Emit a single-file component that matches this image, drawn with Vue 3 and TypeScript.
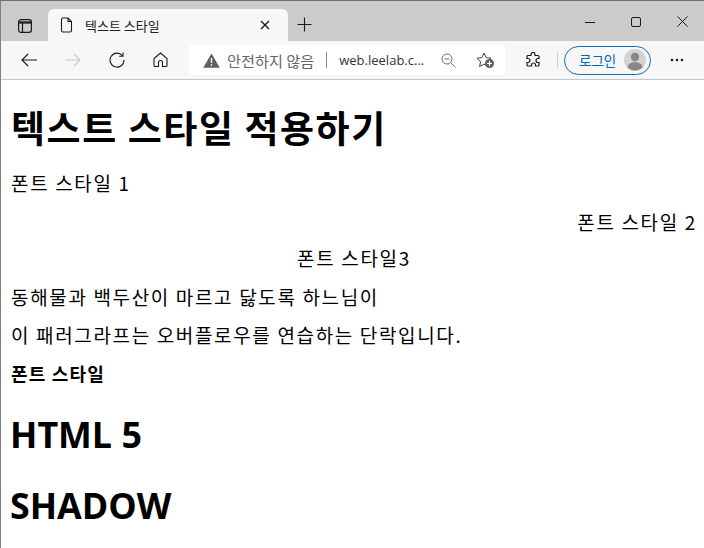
<script setup lang="ts">
const lines: { text: string; cls: string }[] = [
  { text: '폰트 스타일 1', cls: 'p1' },
  { text: '폰트 스타일 2', cls: 'p2' },
  { text: '폰트 스타일3', cls: 'p3' },
  { text: '동해물과 백두산이 마르고 닳도록 하느님이', cls: 'p4' },
  { text: '이 패러그라프는 오버플로우를 연습하는 단락입니다.', cls: 'p5' },
  { text: '폰트 스타일', cls: 'p6' },
]
</script>

<template>
  <div class="window">
    <div class="tabbar">
      <svg class="sidebar-icon" width="16" height="16" viewBox="0 0 16 16" fill="none" stroke="#1a1a1a" stroke-width="1.2">
        <rect x="1.6" y="1.6" width="12.8" height="12.8" rx="2.4" />
        <path d="M1.6 4.500h12.8" stroke-width="2.200" />
        <path d="M5.5 5v9.4" />
      </svg>
      <div class="tab">
        <svg class="doc" width="14" height="16" viewBox="0 0 14 16" fill="none" stroke="#1a1a1a" stroke-width="1.1">
          <path d="M2.5 1h5.5l3.5 3.5V13.5a1.5 1.5 0 0 1-1.5 1.5H3A1.5 1.5 0 0 1 1.500 13.500V2.500A1.500 1.500 0 0 1 3 1z" />
          <path d="M8 1v3.500h3.500" />
        </svg>
        <span class="tab-title">텍스트 스타일</span>
        <svg class="tab-close" width="10" height="10" viewBox="0 0 10 10" stroke="#1a1a1a" stroke-width="1.400">
          <path d="M1 1l8 8M9 1l-8 8" />
        </svg>
      </div>
      <svg class="plus" width="15" height="15" viewBox="0 0 15 15" stroke="#1a1a1a" stroke-width="1.100">
        <path d="M7.500 0.500v14M0.500 7.500h14" />
      </svg>
      <div class="win-controls">
        <svg width="10" height="10" viewBox="0 0 10 10" stroke="#1a1a1a" stroke-width="1"><path d="M0 5.500h10" /></svg>
        <svg width="10" height="10" viewBox="0 0 10 10" fill="none" stroke="#1a1a1a" stroke-width="1"><rect x="0.500" y="0.500" width="9" height="9" rx="1.500" /></svg>
        <svg width="11" height="11" viewBox="0 0 11 11" stroke="#1a1a1a" stroke-width="1"><path d="M0.500 0.500l10 10M10.500 0.500l-10 10" /></svg>
      </div>
    </div>
    <div class="toolbar">
      <svg class="t-back" width="16" height="14" viewBox="0 0 16 14" fill="none" stroke="#1a1a1a" stroke-width="1.100">
        <path d="M16 7H1M7 1L1 7l6 6" />
      </svg>
      <svg class="t-fwd" width="16" height="14" viewBox="0 0 16 14" fill="none" stroke="#c8c8c8" stroke-width="1.100">
        <path d="M0 7h15M9 1l6 6-6 6" />
      </svg>
      <svg class="t-reload" width="16" height="16" viewBox="0 0 16 16" fill="none" stroke="#1a1a1a" stroke-width="1.100">
        <path d="M13.500 3.800A7 7 0 1 0 15 8" />
        <path d="M14 0.500v3.800h-3.800" />
      </svg>
      <svg class="t-home" width="15" height="16" viewBox="0 0 15 16" fill="none" stroke="#1a1a1a" stroke-width="1.100">
        <path d="M7.500 1L1 6.500V13.500a1 1 0 0 0 1 1h3.500V10.500a2 2 0 0 1 4 0v4H13a1 1 0 0 0 1-1V6.500z" />
      </svg>
      <div class="address">
        <svg class="warn" width="17" height="15" viewBox="0 0 17 15">
          <path d="M8.500 0.500L16.800 14.800H0.200z" fill="#5f5f5f" />
          <path d="M8.500 5v5M8.500 11.300v1.500" stroke="#fff" stroke-width="1.400" />
        </svg>
        <span class="insecure">안전하지 않음</span>
        <span class="sep"></span>
        <span class="url">web.leelab.c...</span>
        <svg class="zoom" width="15" height="15" viewBox="0 0 15 15" fill="none" stroke="#707070" stroke-width="1">
          <circle cx="6" cy="6" r="5" />
          <path d="M9.700 9.700L14.500 14.500M3.500 6h5" />
        </svg>
        <svg class="fav" width="19" height="17" viewBox="0 0 19 17" fill="none">
          <path d="M8 1l2.100 4.600 5 .6-3.700 3.400 1 4.900L8 12.100l-4.400 2.400 1-4.900L.9 6.200l5-.6z" stroke="#444" stroke-width="1" />
          <circle cx="13.500" cy="11.500" r="4.500" fill="#5f5f5f" />
          <path d="M13.500 9v5M11 11.500h5" stroke="#fff" stroke-width="1.200" />
        </svg>
      </div>
      <svg class="ext" width="16" height="16" viewBox="0 0 16 16" fill="none" stroke="#1a1a1a" stroke-width="1.200">
        <path d="M6 2.500a2 2 0 0 1 4 0V3.500h3a1 1 0 0 1 1 1V6.500h-1a2 2 0 0 0 0 4h1V13a1 1 0 0 1-1 1h-2.500v-1a2 2 0 0 0-4 0v1H3a1 1 0 0 1-1-1v-2.500H3a2 2 0 0 0 0-4H2V4.500a1 1 0 0 1 1-1h3z" />
      </svg>
      <span class="bar-sep"></span>
      <div class="login">
        <span class="login-text">로그인</span>
        <svg class="avatar" width="22" height="22" viewBox="0 0 22 22">
          <circle cx="11" cy="11" r="11" fill="#d5d3d1" />
          <circle cx="11" cy="8" r="4.200" fill="#8a8886" />
          <path d="M3.500 18.500a7.500 5.500 0 0 1 15 0A11 11 0 0 1 3.500 18.500z" fill="#8a8886" />
        </svg>
      </div>
      <svg class="more" width="14" height="4" viewBox="0 0 14 4" fill="#1a1a1a">
        <circle cx="2" cy="2" r="1.300" /><circle cx="7" cy="2" r="1.300" /><circle cx="12" cy="2" r="1.300" />
      </svg>
    </div>
    <main class="page">
      <h1 class="title">텍스트 스타일 적용하기</h1>
      <p v-for="l in lines" :key="l.cls" :class="['line', l.cls]">{{ l.text }}</p>
      <h1 class="big h5">HTML 5</h1>
      <h1 class="big shadow">SHADOW</h1>
    </main>
  </div>
</template>

<style>
html, body { margin: 0; padding: 0; background: #fff; overflow: hidden; }
</style>

<style scoped>
.window {
  width: 704px;
  height: 548px;
  box-sizing: border-box;
  border-left: 1px solid #808080;
  border-top: 1px solid #6f6f6f;
  overflow: hidden;
  display: flex;
  flex-direction: column;
  font-family: "Noto Sans CJK KR", "Noto Sans", sans-serif;
  color: #000;
}
.tabbar {
  height: 40px;
  flex: none;
  background: #cbcbcb;
  display: flex;
  align-items: flex-start;
  position: relative;
}
.sidebar-icon { margin: 17px 0 0 16px; }
.tab {
  margin: 8px 0 0 15px;
  width: 240px;
  height: 32px;
  box-sizing: border-box;
  background: #f7f7f7;
  border-radius: 6px 6px 0 0;
  display: flex;
  align-items: center;
  padding: 0 18px 0 12px;
}
.tab-title {
  margin-left: 11px;
  font-size: 13px;
  flex: 1;
  color: #222;
}
.plus { margin: 16px 0 0 9px; }
.win-controls {
  margin-left: auto;
  display: flex;
  align-items: center;
  gap: 36px;
  padding: 15px 16px 0 0;
}
.toolbar {
  height: 38px;
  flex: none;
  background: #f7f7f7;
  border-bottom: 1px solid #c6c6c6;
  display: flex;
  align-items: center;
}
.t-back { margin-left: 20px; }
.t-fwd { margin-left: 28px; }
.t-reload { margin-left: 28px; }
.t-home { margin-left: 28px; }
.address {
  margin-left: 21px;
  width: 316px;
  height: 30px;
  box-sizing: border-box;
  background: #fff;
  border-radius: 4px;
  display: flex;
  align-items: center;
  padding-left: 14px;
  font-size: 15.200px;
}
.insecure { margin-left: 7px; color: #666; white-space: nowrap; }
.sep { width: 1px; height: 16px; background: #888; margin: 0 12px 0 12px; }
.url { color: #333; font-family: "Open Sans", sans-serif; font-size: 13px; white-space: nowrap; }
.zoom { margin-left: 17px; }
.fav { margin-left: 20px; }
.ext { margin-left: 20px; }
.bar-sep { width: 1px; height: 16px; background: #d0d0d0; margin-left: 16px; }
.login {
  margin-left: 6px;
  width: 87px;
  height: 29px;
  box-sizing: border-box;
  border: 1.500px solid #0f6cbd;
  border-radius: 15px;
  display: flex;
  align-items: center;
  justify-content: space-between;
  padding: 0 4px 0 14px;
}
.login-text { color: #0067b8; font-size: 13.500px; }
.more { margin-left: 19px; }
.page {
  flex: 1;
  padding: 0 7px 0 10px;
  background: #fff;
}
.title {
  margin: 22px 0 0;
  font-size: 37px;
  line-height: 50px;
  font-weight: 700;
  letter-spacing: 1.550px;
}
.line {
  margin: 0;
  font-size: 19px;
  line-height: 24px;
  letter-spacing: 1.650px;
}
.p1 { margin-top: 19px; }
.p2 { margin-top: 15px; text-align: right; }
.p3 { margin-top: 12px; text-align: center; }
.p4 { margin-top: 15px; }
.p5 { margin-top: 14px; }
.p6 { margin-top: 14px; font-weight: 700; font-size: 18px; letter-spacing: 1.200px; }
.big {
  font-family: "Open Sans", "Noto Sans", sans-serif;
  font-size: 35.800px;
  line-height: 48px;
  font-weight: 670;
}
.h5 { margin: 25px 0 0 -1px; }
.shadow { margin: 23px 0 0 -1px; }
</style>
